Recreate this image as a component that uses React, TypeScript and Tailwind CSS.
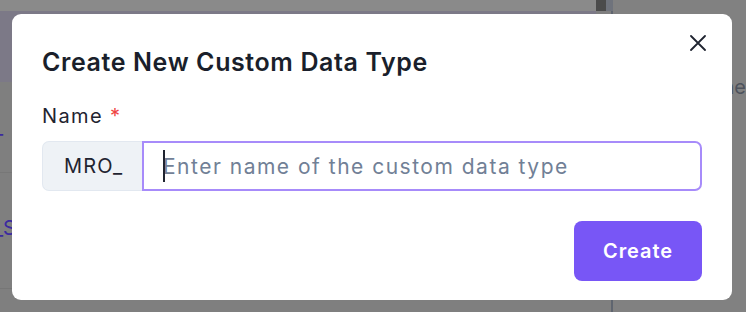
import React, { useState } from 'react';

const font = { fontFamily: 'Inter, "Noto Sans", sans-serif' };

const CloseIcon: React.FC = () => (
  <svg width="16" height="16" viewBox="0 0 16 16" fill="none" stroke="currentColor" strokeWidth="1.8" strokeLinecap="round">
    <path d="M1 1L15 15M15 1L1 15" />
  </svg>
);

const App: React.FC = () => {
  const [name, setName] = useState('');

  return (
    <div className="relative h-[312px] w-[746px] overflow-hidden bg-[#7f7f7f]" style={font}>
      {/* Page behind the dialog (already dimmed) */}
      <div className="flex h-full">
        <div className="flex w-[603px] flex-col">
          <div className="h-[11px] bg-[#8a8a8a]" />
          <div className="h-[71px] bg-[#7c7987]" />
          <div className="flex h-[91px] items-center border-b border-[#777] text-[20px] text-[#3b2aa0]">
            <span className="ml-[-6px]">_</span>
          </div>
          <div className="flex h-[116px] items-center border-b border-[#767676] text-[20px] text-[#3b2aa0]">
            <span className="mt-[-6px] ml-[-6px]">_S</span>
          </div>
        </div>
        <div className="flex w-[17px] flex-col">
          <div className="flex h-[11px]">
            <div className="w-[10px] bg-[#4b4b4b]" />
            <div className="w-[7px] bg-[#6f737c]" />
          </div>
          <div className="flex flex-1 justify-end">
            <div className="w-[2px] bg-[#5f656f]" />
          </div>
        </div>
        <div className="flex-1 bg-[#818181] pt-[72px] pl-[110px] text-[20px] whitespace-nowrap text-[#4e535d]">
          he
        </div>
      </div>

      {/* Dialog */}
      <div className="absolute inset-0 flex items-start justify-center pt-[14px]">
        <div className="relative mr-[2px] w-[720px] rounded-[9px] bg-white px-[30px] pt-[32px] pb-[19px]">
          <button className="absolute top-[21px] right-[26px] text-[#1f2430]">
            <CloseIcon />
          </button>

          <h2 className="text-[25px] leading-[32px] font-semibold tracking-[0.6px] text-[#1a1f2b]">
            Create New Custom Data Type
          </h2>

          <label className="mt-[24px] block text-[20px] leading-[28px] tracking-[1.4px] text-[#1f2430]">
            Name <span className="text-[#ef4444]">*</span>
          </label>

          <div className="mt-[11px] flex h-[50px]">
            <div className="flex w-[100px] shrink-0 items-center rounded-l-[7px] border border-r-0 border-[#e2e8f0] bg-[#eef2f6] pl-[21px] text-[20px] tracking-[1.2px] text-[#1f2430]">
              MRO_
            </div>
            <div className="relative flex-1">
              <input
                autoFocus
                value={name}
                onChange={(e) => setName(e.target.value)}
                placeholder="Enter name of the custom data type"
                className="h-full w-full rounded-r-[7px] border-2 border-[#a78bfa] bg-white pl-[19px] text-[21px] tracking-[1.5px] text-[#1f2430] caret-[#1f2430] outline-none placeholder:text-[#718096]"
              />
              {name === '' && (
                <span className="pointer-events-none absolute top-[9px] left-[21px] h-[32px] w-[1.5px] bg-[#1f2430]" />
              )}
            </div>
          </div>

          <div className="mt-[30px] flex justify-end">
            <button className="h-[60px] w-[128px] rounded-[8px] bg-[#7856f6] text-[20px] font-semibold tracking-[0.9px] text-white">
              Create
            </button>
          </div>
        </div>
      </div>
    </div>
  );
};

export default App;
